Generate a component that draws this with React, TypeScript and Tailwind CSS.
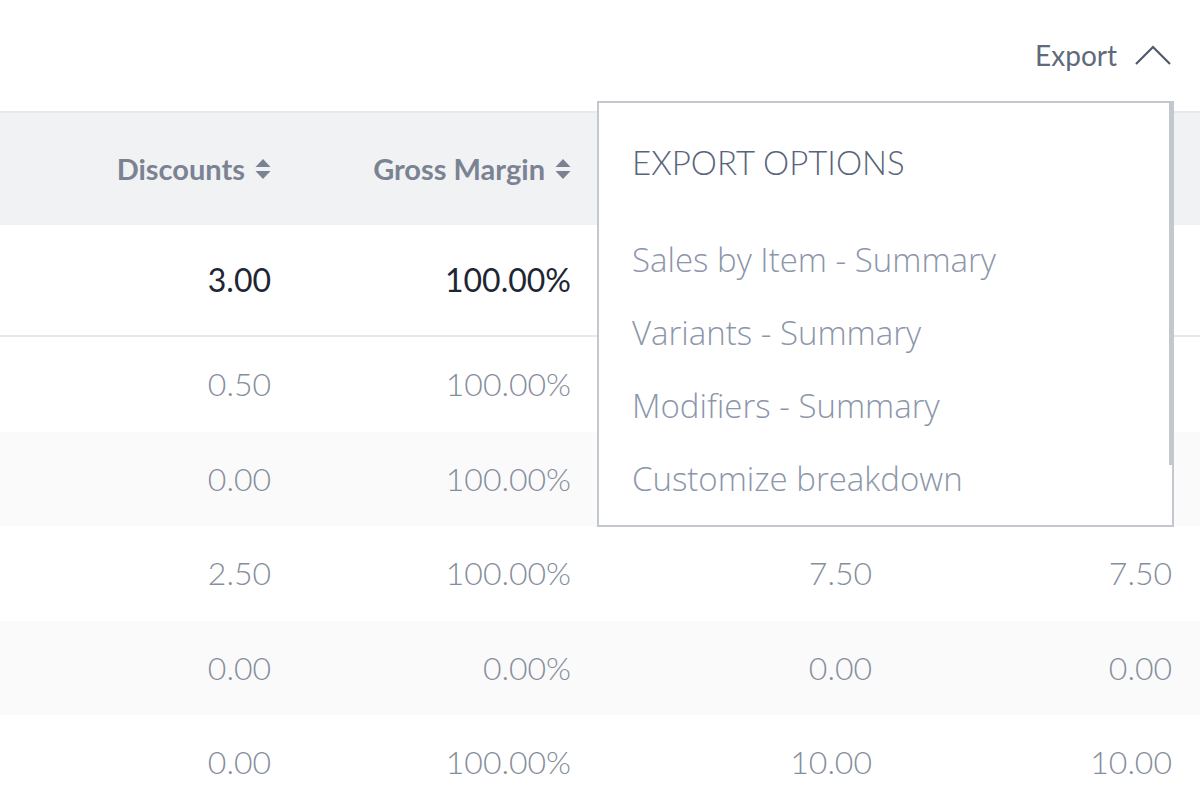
// cells under the open export menu are left blank; the menu covers them
const rows = [
  { disc: '0.50', margin: '100.00%', net: '', gross: '' },
  { disc: '0.00', margin: '100.00%', net: '', gross: '' },
  { disc: '2.50', margin: '100.00%', net: '7.50', gross: '7.50' },
  { disc: '0.00', margin: '0.00%', net: '0.00', gross: '0.00' },
  { disc: '0.00', margin: '100.00%', net: '10.00', gross: '10.00' },
];

const exportOptions = [
  'Sales by Item - Summary',
  'Variants - Summary',
  'Modifiers - Summary',
  'Customize breakdown',
];

function SortIcon() {
  return (
    <svg width="16" height="22" viewBox="0 0 16 22" className="ml-[10px]">
      <path d="M8 1 L15.5 9 H0.5 Z" fill="#7b8393" />
      <path d="M8 21 L15.5 13 H0.5 Z" fill="#7b8393" />
    </svg>
  );
}

function HeaderCell({ label }: { label?: string }) {
  return (
    <div className="flex items-center justify-end pr-[29px]">
      {label && (
        <>
          <span>{label}</span>
          <SortIcon />
        </>
      )}
    </div>
  );
}

export default function App() {
  return (
    <div
      className="relative w-[1200px] h-[790px] overflow-hidden bg-white"
      style={{ fontFamily: 'Lato, "Open Sans", sans-serif' }}
    >
      <div className="flex h-[111px] items-center justify-end pr-[29px] pb-[2px]">
        <button className="flex items-center gap-[18px] text-[28px] leading-[40px] text-[#5f6a7a]">
          Export
          <svg width="36" height="24" viewBox="0 0 36 24" fill="none">
            <path d="M1 21 L18 4 L35 21" stroke="#4f5b6c" strokeWidth="2.2" />
          </svg>
        </button>
      </div>

      <div className="border-t-2 border-[#e6e8eb]">
        <div className="grid h-[112px] grid-cols-4 bg-[#f1f2f4] text-[29px] font-bold text-[#7b8393]">
          <HeaderCell label="Discounts" />
          <HeaderCell label="Gross Margin" />
          <HeaderCell />
          <HeaderCell />
        </div>

        <div className="grid h-[112px] grid-cols-4 border-b-2 border-[#e6e8eb] text-[32px] text-[#1e2533]">
          <div className="flex items-center justify-end pr-[29px]">3.00</div>
          <div className="flex items-center justify-end pr-[29px]">100.00%</div>
          <div />
          <div />
        </div>

        {rows.map((r, i) => (
          <div
            key={i}
            className={`grid h-[94.5px] grid-cols-4 text-[32px] font-light text-[#858e9c] ${
              i % 2 === 1 ? 'bg-[#fafafa]' : 'bg-white'
            }`}
          >
            <div className="flex items-center justify-end pr-[29px]">{r.disc}</div>
            <div className="flex items-center justify-end pr-[29px]">{r.margin}</div>
            <div className="flex items-center justify-end pr-[28px]">{r.net}</div>
            <div className="flex items-center justify-end pr-[28px]">{r.gross}</div>
          </div>
        ))}
      </div>

      {/* export dropdown */}
      <div className="absolute left-[597px] top-[101px] h-[426px] w-[577px] border-2 border-[#c3c8cf] bg-white">
        <div className="absolute right-0 top-0 h-[362px] w-[3px] bg-[#c3c8cf]" />
        <div className="pl-[33px] pt-[39px] text-[33px] leading-[40px] font-light uppercase text-[#58647a]">
          Export options
        </div>
        <ul
          className="mt-[57px] flex flex-col gap-[31px] pl-[33px] text-[33px] font-light text-[#8c96aa]"
          style={{ fontFamily: '"Open Sans", sans-serif' }}
        >
          {exportOptions.map((o) => (
            <li key={o} className="leading-[42px]">
              {o}
            </li>
          ))}
        </ul>
      </div>
    </div>
  );
}
